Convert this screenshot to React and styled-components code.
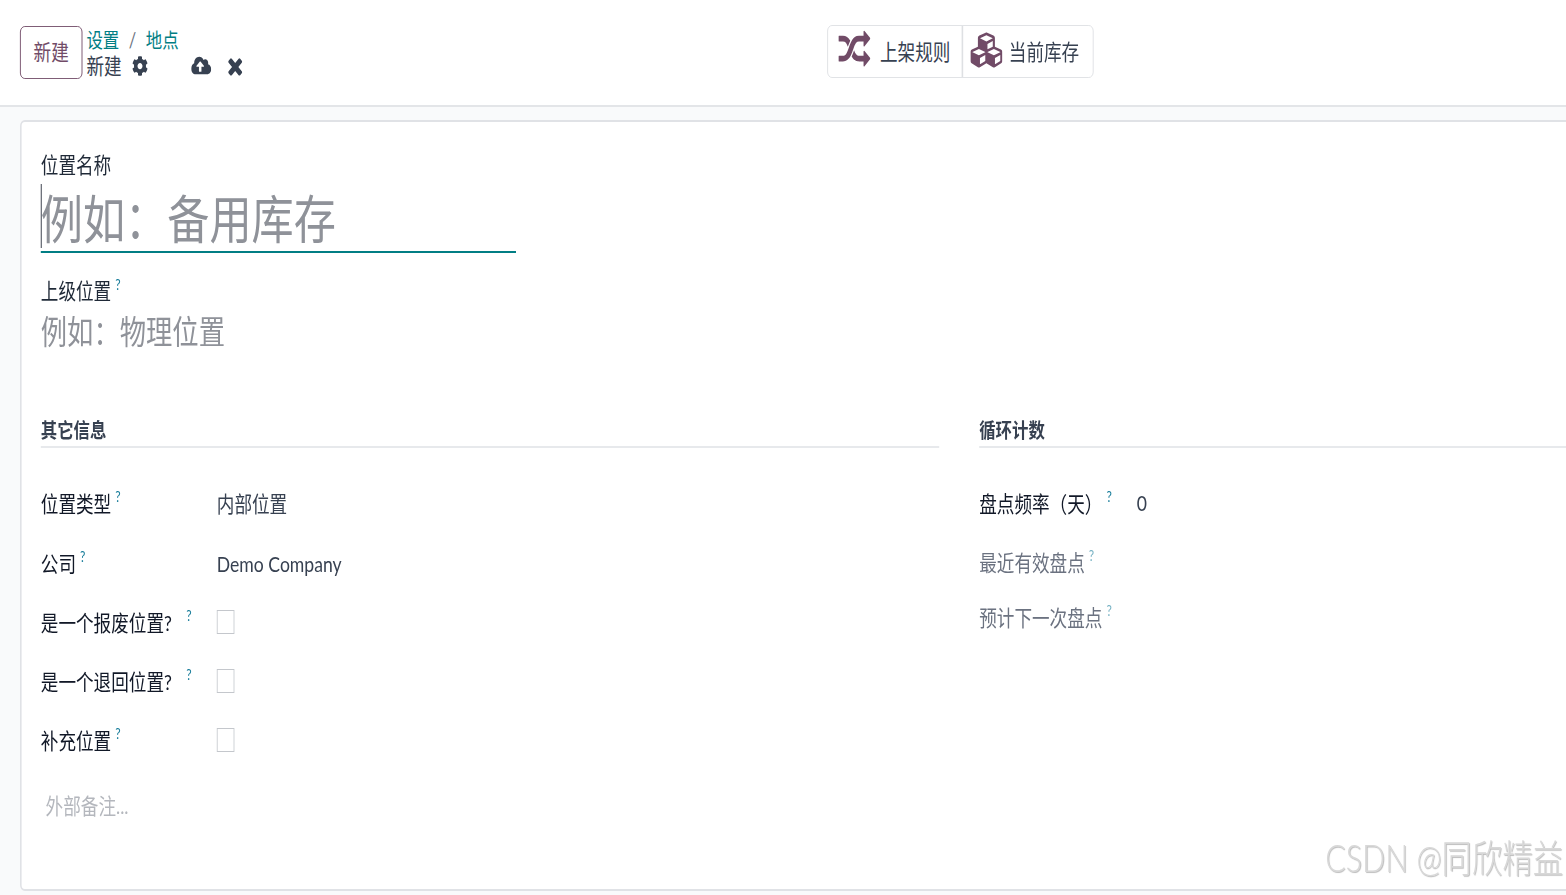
import React from "react";
import styled, { createGlobalStyle } from "styled-components";
import { FaCog, FaCloudUploadAlt, FaCubes } from "react-icons/fa";

// the reference is squeezed horizontally, so the page is laid out wide and scaled down on x
const GlobalStyle = createGlobalStyle`
  html, body {
    margin: 0;
    height: 100%;
    overflow: hidden;
    background: #f9fafb;
  }
  * {
    box-sizing: border-box;
  }
`;

const Stage = styled.div`
  width: 1958px;
  height: 895px;
  transform: scaleX(0.8);
  transform-origin: 0 0;
  display: flex;
  flex-direction: column;
  position: relative;
  overflow: hidden;
  font-family: "Lato", "Noto Sans CJK SC", sans-serif;
  font-size: 22px;
  font-weight: 400;
  color: #1f2937;
`;

const TopBar = styled.div`
  height: 107px;
  flex: none;
  background: #fff;
  border-bottom: 2px solid #e3e5e8;
  padding: 25px 0 0 25px;
  display: flex;
  align-items: flex-start;
`;

const LeftGroup = styled.div`
  flex: 0 0 1009px;
  display: flex;
  align-items: flex-start;
  gap: 5px;
`;

const NewButton = styled.button`
  width: 78px;
  height: 53px;
  margin-top: 1px;
  background: #fff;
  border: 1px solid #714b67;
  border-radius: 6px;
  color: #714b67;
  font: inherit;
  line-height: 47px;
  padding: 0 0 2px;
`;

const Crumbs = styled.div`
  display: flex;
  flex-direction: column;
`;

const CrumbLine = styled.div`
  display: flex;
  align-items: center;
  height: 27px;
  margin-top: 2px;
  margin-bottom: -2px;
  color: #017e84;
  font-size: 20.5px;
  line-height: 27px;
`;

const Slash = styled.span`
  color: #6b7280;
  margin: 0 12px;
`;

const TitleLine = styled.div`
  display: flex;
  align-items: center;
  height: 27px;
  line-height: 25px;
  color: #374151;
`;

const ActionIcon = styled.span`
  display: inline-flex;
  color: #374151;
  font-size: ${(p) => p.$size}px;
  margin-left: ${(p) => p.$gap}px;
`;

const StatGroup = styled.div`
  display: flex;
  height: 53px;
  border: 1px solid #dee0e3;
  border-radius: 6px;
  background: #fff;
`;

const StatButton = styled.div`
  width: ${(p) => p.$width}px;
  display: flex;
  align-items: center;
  padding: 0 0 3px ${(p) => p.$pad}px;
  gap: ${(p) => p.$gap}px;
  color: #374151;
  & + & {
    border-left: 2px solid #dee0e3;
  }
`;

const StatIcon = styled.span`
  display: inline-flex;
  color: #714b67;
  font-size: ${(p) => p.$size}px;
`;

const Card = styled.div`
  flex: 1;
  margin: 13px -10px 4px 25px;
  background: #fff;
  border: 2px solid #e0e2e6;
  border-radius: 6px;
  padding: 29px 0 0 24px;
`;

const FieldLabel = styled.div`
  line-height: 28px;
  display: flex;
  color: #1f2937;
`;

const Help = styled.sup`
  font-size: 15px;
  line-height: 15px;
  color: #1c7f9c;
  margin-left: ${(p) => p.$gap || 5}px;
  margin-top: ${(p) => p.$top || 0}px;
  opacity: ${(p) => (p.$muted ? 0.6 : 1)};
`;

const NameInput = styled.div`
  width: 594px;
  height: 69px;
  margin-top: 5px;
  border-bottom: 2px solid #017e84;
  font-size: 52.7px;
  line-height: 70px;
  color: #8f9299;
  position: relative;
`;

const Caret = styled.span`
  position: absolute;
  left: 0;
  top: 0;
  width: 1px;
  height: 64px;
  background: #111827;
`;

const ParentBlock = styled.div`
  margin-top: 24px;
`;

const ParentInput = styled.div`
  font-size: 32.9px;
  line-height: 46px;
  margin-top: 4px;
  color: #8f9299;
`;

const Columns = styled.div`
  display: grid;
  grid-template-columns: 1123px 1fr;
  column-gap: 50px;
  margin-top: 58px;
`;

const SectionTitle = styled.div`
  height: 35px;
  font-size: 20.5px;
  line-height: 34px;
  font-weight: 700;
  color: #374151;
  border-bottom: 2px solid #e7e9ec;
  margin-bottom: 24px;
`;

const Row = styled.div`
  display: grid;
  grid-template-columns: ${(p) => p.$col}px 1fr;
  align-items: center;
  height: ${(p) => p.$h}px;
`;

const RowLabel = styled.div`
  display: flex;
  color: ${(p) => (p.$muted ? "#6b7280" : "#111827")};
`;

const RowValue = styled.div`
  color: #374151;
  padding-top: ${(p) => p.$nudge || 0}px;
`;

const CheckBox = styled.span`
  display: block;
  width: 22px;
  height: 24px;
  margin-top: 2px;
  border: 1px solid #c4c7cc;
  background: #fff;
`;

const Notes = styled.div`
  margin: 20px 0 0 6px;
  color: #b4b7bd;
`;

const Watermark = styled.div`
  position: absolute;
  right: 4px;
  bottom: 13px;
  font-size: 38px;
  font-weight: 300;
  line-height: 50px;
  color: #d8d8d8;
  text-shadow: 1px 1px 1px #bdbdbd;
`;

const ShuffleIcon = () => (
  <svg width="1em" height="1em" viewBox="0 0 1792 1792" fill="currentColor">
    <path d="M666 481q-60 92-137 273-22-45-37-72.5t-40.5-63.5-51-56.5-63-35-81.5-14.5h-224q-14 0-23-9t-9-23v-192q0-14 9-23t23-9h224q250 0 410 225zm1126 799q0 14-9 23l-320 320q-9 9-23 9-13 0-22.5-9.5t-9.5-22.5v-192q-32 0-85 .5t-81 1-73-1-71-5-64-10.5-63-18.5-58-28.5-59-40-55-53.5-56-69.5q59-93 136-273 22 45 37 72.5t40.5 63.5 51 56.5 63 35 81.5 14.5h256v-192q0-14 9-23t23-9q12 0 24 10l319 319q9 9 9 23zm0-896q0 14-9 23l-320 320q-9 9-23 9-13 0-22.5-9.5t-9.5-22.5v-192h-256q-48 0-87 15t-69 45-51 61.5-45 77.5q-32 62-78 171-29 66-49.5 111t-54 105-64 100-74 83-90 68.5-106.5 42-128 16.5h-224q-14 0-23-9t-9-23v-192q0-14 9-23t23-9h224q48 0 87-15t69-45 51-61.5 45-77.5q32-62 78-171 29-66 49.5-111t54-105 64-100 74-83 90-68.5 106.5-42 128-16.5h256v-192q0-14 9-23t23-9q12 0 24 10l319 319q9 9 9 23z" />
  </svg>
);

const CloseIcon = () => (
  <svg width="1em" height="1em" viewBox="0 0 1792 1792" fill="currentColor">
    <path d="M1490 1322q0 40-28 68l-136 136q-28 28-68 28t-68-28l-294-294-294 294q-28 28-68 28t-68-28l-136-136q-28-28-28-68t28-68l294-294-294-294q-28-28-28-68t28-68l136-136q28-28 68-28t68 28l294 294 294-294q28-28 68-28t68 28l136 136q28 28 28 68t-28 68l-294 294 294 294q28 28 28 68z" />
  </svg>
);

const leftRows = [
  { label: "位置类型", value: "内部位置", h: 60 },
  { label: "公司", value: "Demo Company", h: 59, nudge: 3 },
  { label: "是一个报废位置?", check: true, h: 59, gap: 18 },
  { label: "是一个退回位置?", check: true, h: 59, gap: 18 },
  { label: "补充位置", check: true, h: 59 },
];

const rightRows = [
  { label: "盘点频率（天）", value: "0", h: 60 },
  { label: "最近有效盘点", muted: true, h: 57 },
  { label: "预计下一次盘点", muted: true, h: 54 },
];

const App = () => {
  return (
    <>
      <GlobalStyle />
      <Stage>
        <TopBar>
          <LeftGroup>
            <NewButton>新建</NewButton>
            <Crumbs>
              <CrumbLine>
                设置<Slash>/</Slash>地点
              </CrumbLine>
              <TitleLine>
                新建
                <ActionIcon $size={20} $gap={13}><FaCog /></ActionIcon>
                <ActionIcon $size={25} $gap={54}><FaCloudUploadAlt /></ActionIcon>
                <ActionIcon $size={26} $gap={17}><CloseIcon /></ActionIcon>
              </TitleLine>
            </Crumbs>
          </LeftGroup>
          <StatGroup>
            <StatButton $width={167} $pad={13} $gap={12}>
              <StatIcon $size={40}><ShuffleIcon /></StatIcon>
              上架规则
            </StatButton>
            <StatButton $width={164} $pad={9} $gap={8}>
              <StatIcon $size={40}><FaCubes /></StatIcon>
              当前库存
            </StatButton>
          </StatGroup>
        </TopBar>
        <Card>
          <FieldLabel>位置名称</FieldLabel>
          <NameInput>
            <Caret />
            例如：备用库存
          </NameInput>
          <ParentBlock>
            <FieldLabel>
              上级位置<Help>?</Help>
            </FieldLabel>
            <ParentInput>例如：物理位置</ParentInput>
          </ParentBlock>
          <Columns>
            <div>
              <SectionTitle>其它信息</SectionTitle>
              {leftRows.map((row) => (
                <Row key={row.label} $col={220} $h={row.h}>
                  <RowLabel>
                    {row.label}
                    <Help $gap={row.gap} $top={3}>?</Help>
                  </RowLabel>
                  {row.check ? <CheckBox /> : <RowValue $nudge={row.nudge}>{row.value}</RowValue>}
                </Row>
              ))}
              <Notes>外部备注...</Notes>
            </div>
            <div>
              <SectionTitle>循环计数</SectionTitle>
              {rightRows.map((row) => (
                <Row key={row.label} $col={197} $h={row.h}>
                  <RowLabel $muted={row.muted}>
                    {row.label}
                    <Help $muted={row.muted} $top={3}>?</Help>
                  </RowLabel>
                  <RowValue>{row.value}</RowValue>
                </Row>
              ))}
            </div>
          </Columns>
        </Card>
        <Watermark>CSDN @同欣精益</Watermark>
      </Stage>
    </>
  );
};

export default App;
